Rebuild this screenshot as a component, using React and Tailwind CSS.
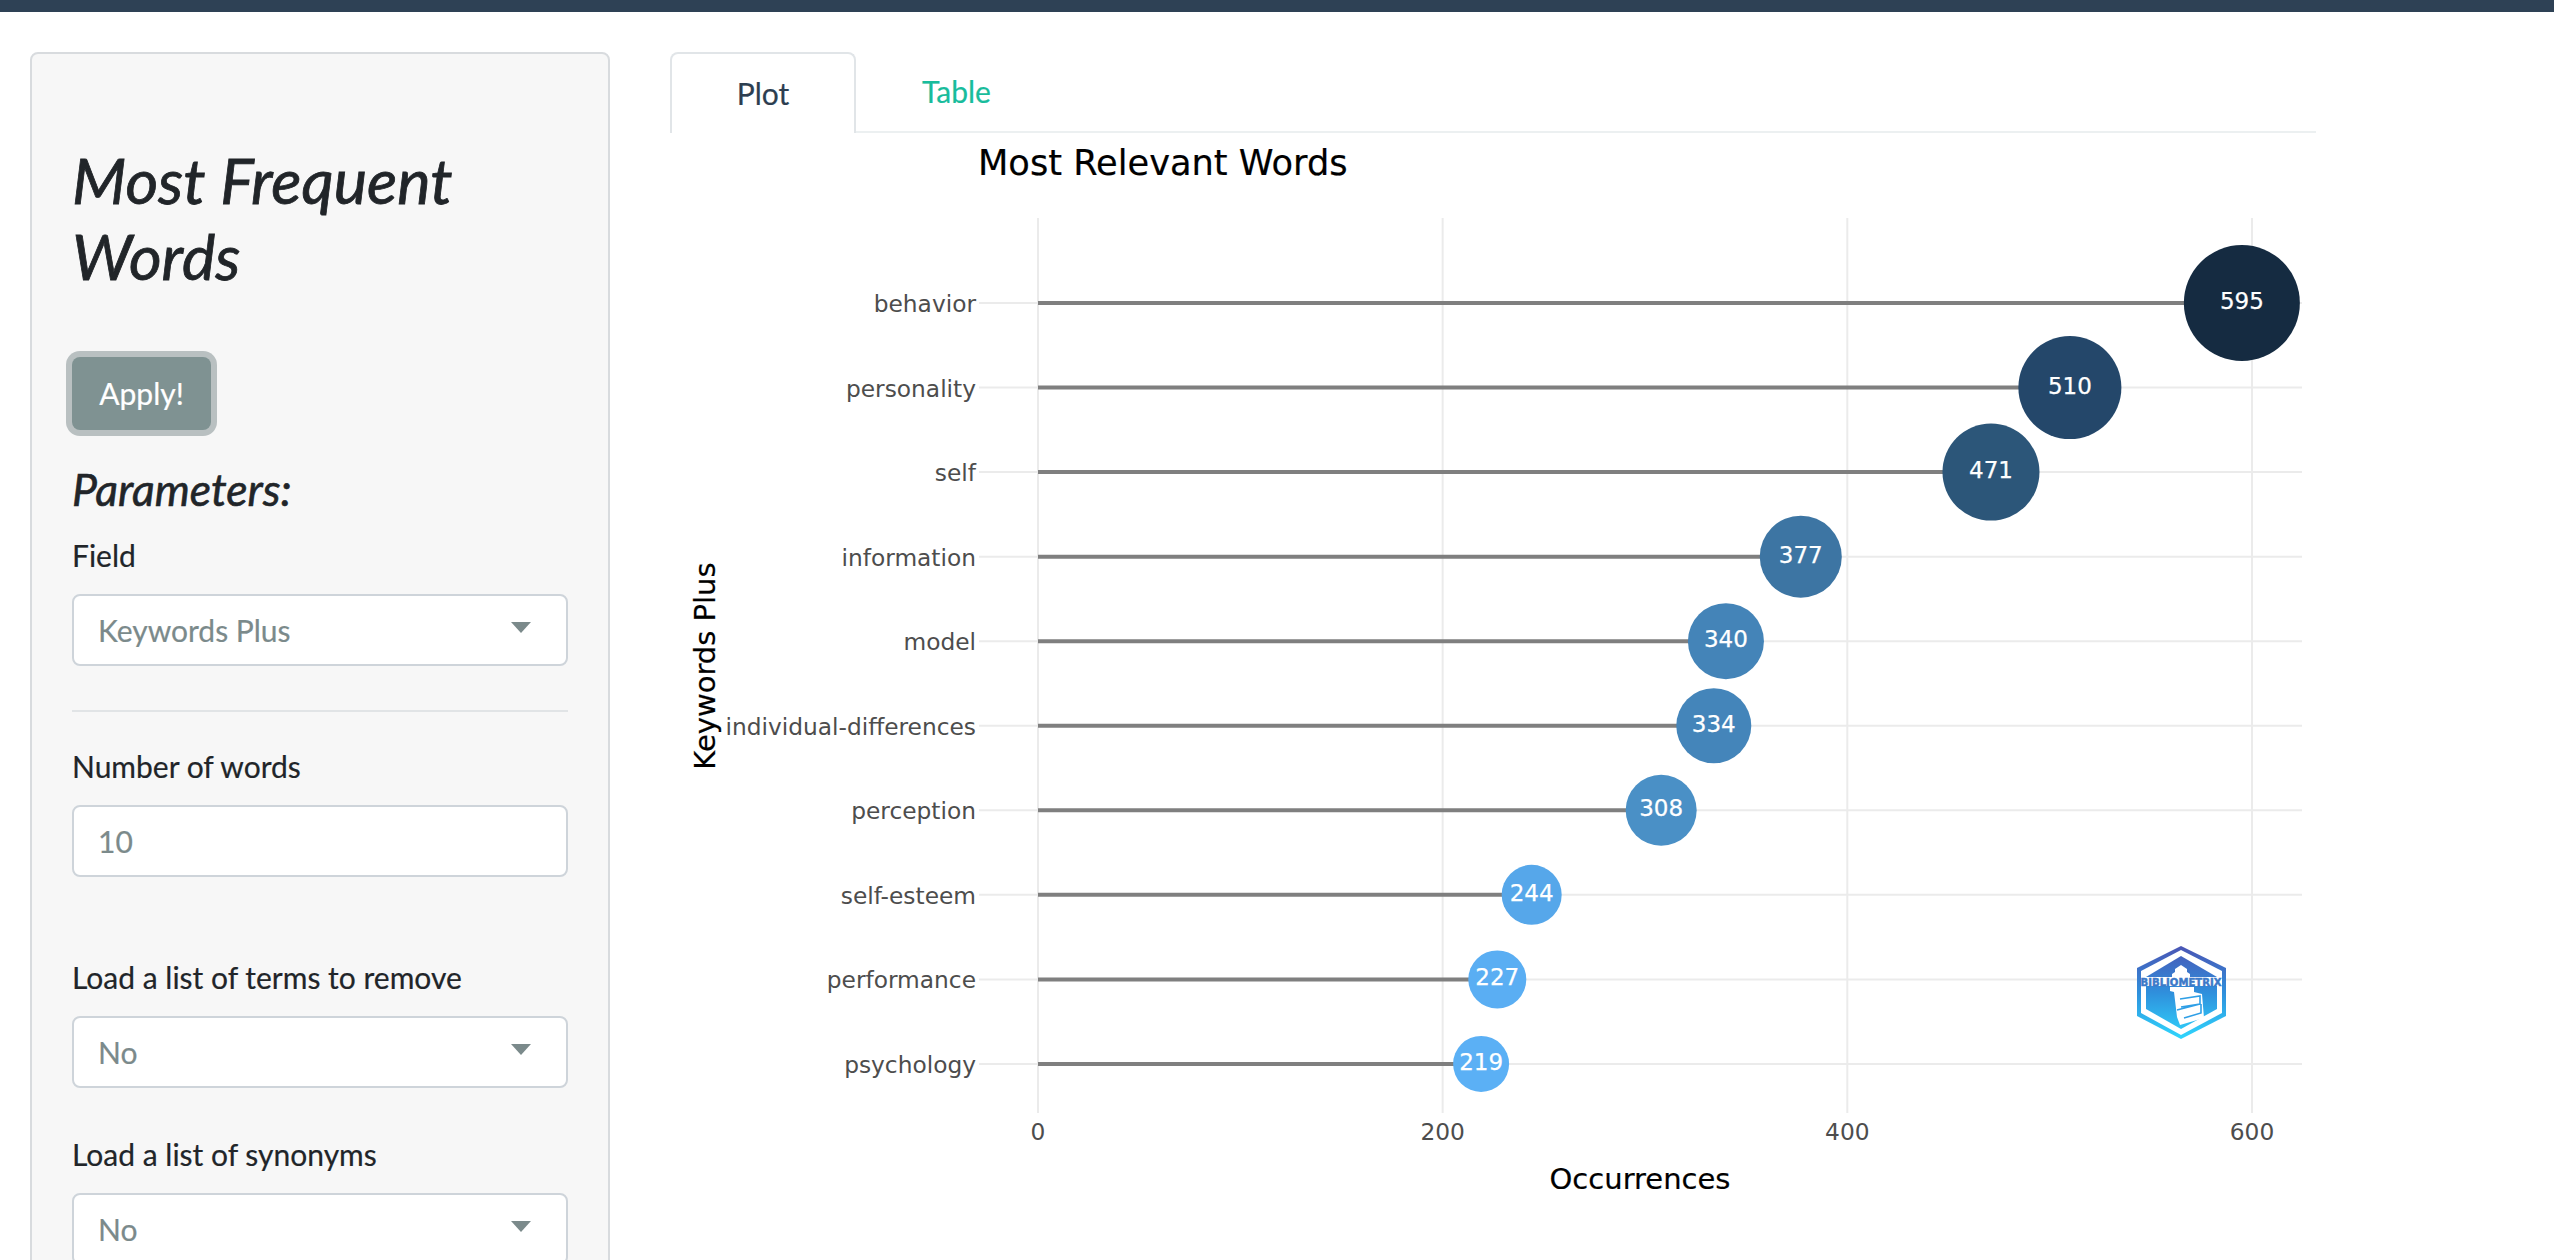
const LATO = "font-['Lato',sans-serif]";

const rows = [
  { label: "behavior", v: 595, d: 116, c: "#152b41" },
  { label: "personality", v: 510, d: 103, c: "#24476a" },
  { label: "self", v: 471, d: 97, c: "#2c5679" },
  { label: "information", v: 377, d: 82, c: "#3d75a3" },
  { label: "model", v: 340, d: 76, c: "#4484b8" },
  { label: "individual-differences", v: 334, d: 75, c: "#4485ba" },
  { label: "perception", v: 308, d: 71, c: "#4a90c6" },
  { label: "self-esteem", v: 244, d: 60, c: "#56a7ea" },
  { label: "performance", v: 227, d: 58, c: "#5aaef3" },
  { label: "psychology", v: 219, d: 56, c: "#5bb0f5" },
];
const X = (v) => 1038 + v * 2.0233;
const Y = (i) => 303 + i * 84.55;
const FONT = "'DejaVu Sans', sans-serif";

function Logo() {
  return (
    <g>
      <defs>
        <linearGradient id="hexg" gradientUnits="userSpaceOnUse" x1="2181" y1="946" x2="2181" y2="1039">
          <stop offset="0" stopColor="#4a55b4" />
          <stop offset="0.5" stopColor="#2f8fdc" />
          <stop offset="1" stopColor="#2fd6fd" />
        </linearGradient>
      </defs>
      <polygon points="2181,946 2226,968 2226,1016 2181,1039 2137,1016 2137,968" fill="url(#hexg)" />
      <polygon points="2181,950 2222,971 2222,1013 2181,1035 2141,1013 2141,971" fill="#ffffff" />
      <polygon points="2181,956 2146,977 2217,977" fill="url(#hexg)" />
      <polygon points="2146,986 2217,986 2217,1009 2181,1029 2146,1009" fill="url(#hexg)" />
      <path d="M2181 965 l6 4 v3 l3 2 v5 h-18 v-5 l3 -2 v-3 z" fill="#ffffff" />
      <path d="M2170 987 h24 v5 l8 2 l2 24 l-24 7 l-3 -8 l-3 -25 l-4 -1 z" fill="#ffffff" />
      <path d="M2180 999 l20 -3 v8 l-19 3 M2177 1010 l23 -6 M2184 1018 l17 -5 v-9" fill="none" stroke="#2f9fe6" strokeWidth="1.6" />
      <text x="2181" y="986" textAnchor="middle" fontFamily={FONT} fontSize="11" fontWeight="700" fill="#3d79c8" stroke="#3d79c8" strokeWidth="0.5" textLength="81" lengthAdjust="spacingAndGlyphs">BIBLIOMETRIX</text>
    </g>
  );
}

function Chart() {
  return (
    <svg className="block w-[1646px] h-[1127px]" viewBox="670 133 1646 1127">
      {[0, 200, 400, 600].map((t) => (
        <line key={t} x1={X(t)} x2={X(t)} y1="218" y2="1113" stroke="#ebebeb" strokeWidth="2" />
      ))}
      {rows.map((r, i) => (
        <line key={r.label} x1="979" x2="2302" y1={Y(i)} y2={Y(i)} stroke="#ebebeb" strokeWidth="2" />
      ))}
      <Logo />
      {rows.map((r, i) => (
        <line key={r.label} x1="1038" x2={X(r.v)} y1={Y(i)} y2={Y(i)} stroke="#7f7f7f" strokeWidth="4" />
      ))}
      {rows.map((r, i) => (
        <circle key={r.label} cx={X(r.v)} cy={Y(i)} r={r.d / 2} fill={r.c} />
      ))}
      {rows.map((r, i) => (
        <text key={r.label} x={X(r.v)} y={Y(i) + 6} textAnchor="middle" fontFamily={FONT} fontSize="23" fill="#ffffff" stroke="#ffffff" strokeWidth="0.25">{r.v}</text>
      ))}
      {rows.map((r, i) => (
        <text key={r.label} x="976" y={Y(i) + 9} textAnchor="end" fontFamily={FONT} fontSize="23.3" fill="#4d4d4d">{r.label}</text>
      ))}
      {[0, 200, 400, 600].map((t) => (
        <text key={t} x={X(t)} y="1140" textAnchor="middle" fontFamily={FONT} fontSize="23.3" fill="#4d4d4d">{t}</text>
      ))}
      <text x="978" y="175" fontFamily={FONT} fontSize="35.2" fill="#000000" stroke="#000000" strokeWidth="0.2">Most Relevant Words</text>
      <text x="1640" y="1189" textAnchor="middle" fontFamily={FONT} fontSize="29" fill="#000000" stroke="#000000" strokeWidth="0.2">Occurrences</text>
      <text x="715" y="666" textAnchor="middle" fontFamily={FONT} fontSize="29" fill="#000000" stroke="#000000" strokeWidth="0.2" transform="rotate(-90 715 666)">Keywords Plus</text>
    </svg>
  );
}

function Label({ children, className = "" }) {
  return <div className={`text-[30px] leading-[40px] text-[#212529] [-webkit-text-stroke:0.2px] ${className}`}>{children}</div>;
}

function Select({ value }) {
  return (
    <div className="flex items-center justify-between h-[72px] rounded-[8px] border-2 border-[#ced4da] bg-white pl-[24px] pr-[35px] text-[30px] text-[#7b8a8b] [-webkit-text-stroke:0.2px]">
      <span>{value}</span>
      <span className="w-0 h-0 border-x-[10px] border-x-transparent border-t-[11px] border-t-[#7b8a8b] -mt-[6px]" />
    </div>
  );
}

export default function App() {
  return (
    <div className={`h-screen overflow-hidden bg-white ${LATO}`}>
      <div className="h-[12px] bg-[#2e4155]" />
      <div className="flex">
        <aside className="ml-[30px] mt-[40px] w-[580px] shrink-0 rounded-[8px] border-2 border-[#d8dbde] bg-[#f7f7f7] px-[40px] pt-[88px] pb-[40px]">
          <h2 className="text-[63px] leading-[76px] italic text-[#212529] font-normal [-webkit-text-stroke:0.8px]">Most Frequent Words</h2>
          <button className="mt-[63px] block h-[73px] w-[139px] rounded-[8px] bg-[#7f9292] text-[30px] text-white ring-[6px] ring-[#b9c0c1] [-webkit-text-stroke:0.2px]">Apply!</button>
          <h3 className="mt-[29px] text-[44.5px] leading-[60px] italic text-[#212529] font-normal [-webkit-text-stroke:0.6px]">Parameters:</h3>
          <Label className="mt-[16px] mb-[19px]">Field</Label>
          <Select value="Keywords Plus" />
          <hr className="mt-[44px] mb-0 border-0 h-[2px] bg-[#e1e4e6]" />
          <Label className="mt-[34px] mb-[19px]">Number of words</Label>
          <input readOnly value="10" className="block w-full h-[72px] rounded-[8px] border-2 border-[#ced4da] bg-white px-[24px] text-[30px] text-[#7b8a8b] outline-none [-webkit-text-stroke:0.2px]" />
          <Label className="mt-[80px] mb-[19px]">Load a list of terms to remove</Label>
          <Select value="No" />
          <Label className="mt-[46px] mb-[19px]">Load a list of synonyms</Label>
          <Select value="No" />
        </aside>
        <main className="ml-[60px] mt-[40px] w-[1646px] shrink-0">
          <nav className="flex h-[81px] border-b-2 border-[#ecf0f1] text-[30px] [-webkit-text-stroke:0.2px]">
            <div className="flex h-[81px] w-[186px] items-center justify-center rounded-t-[8px] border-2 border-b-0 border-[#e1e5e8] bg-white text-[#2c3e50]">Plot</div>
            <div className="flex h-[79px] items-center px-[66px] text-[#18bc9c]">Table</div>
          </nav>
          <Chart />
        </main>
      </div>
    </div>
  );
}
